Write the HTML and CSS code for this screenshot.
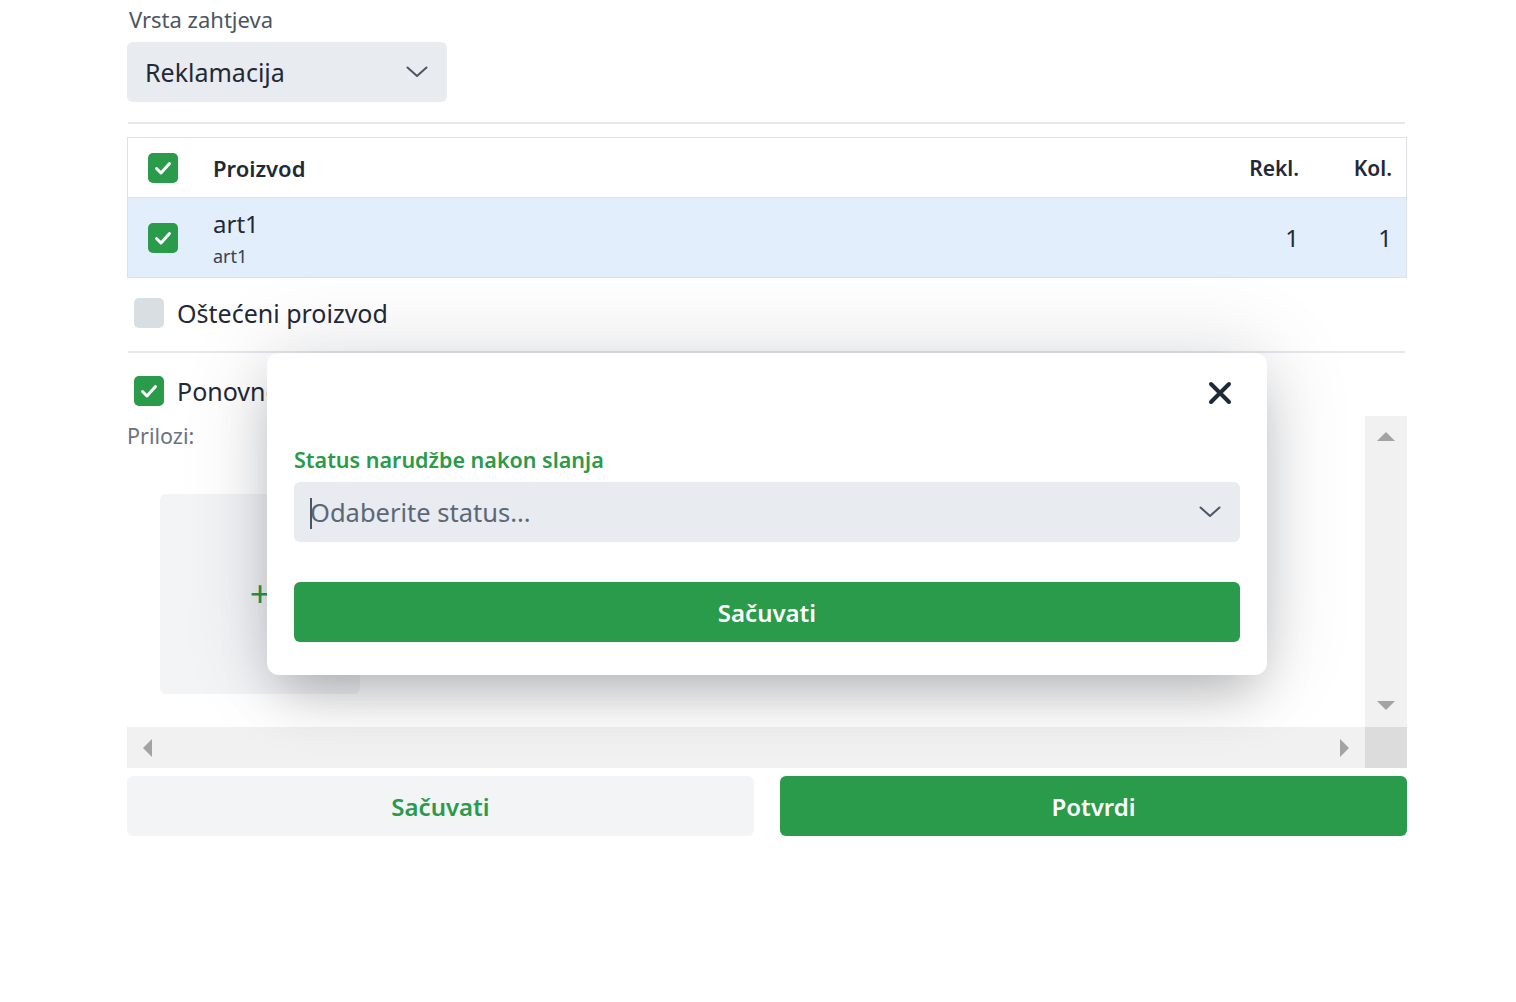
FILE: index.html
```html
<!DOCTYPE html>
<html lang="hr">
<head>
<meta charset="utf-8">
<title>Zahtjev</title>
<link rel="stylesheet" href="styles.css">
</head>
<body>
<div class="page">
  <div class="field-label">Vrsta zahtjeva</div>
  <div class="select select-type">
    <span class="select-value">Reklamacija</span>
    <svg class="chevron" width="22" height="12" viewBox="0 0 22 12"><path d="M1.5 1.5 L11 10 L20.5 1.5" fill="none" stroke="#4b5563" stroke-width="2" stroke-linecap="round" stroke-linejoin="round"/></svg>
  </div>
  <div class="divider first"></div>

  <div class="items">
    <div class="items-row items-head">
      <span class="cb on"><svg width="30" height="30" viewBox="0 0 30 30"><path d="M8.5 15.5 L13 20 L21.5 10.5" fill="none" stroke="#fff" stroke-width="3" stroke-linecap="round" stroke-linejoin="round"/></svg></span>
      <span class="col-name">Proizvod</span>
      <span class="col-num col-rekl">Rekl.</span>
      <span class="col-num col-kol">Kol.</span>
    </div>
    <div class="items-row items-body">
      <span class="cb on"><svg width="30" height="30" viewBox="0 0 30 30"><path d="M8.5 15.5 L13 20 L21.5 10.5" fill="none" stroke="#fff" stroke-width="3" stroke-linecap="round" stroke-linejoin="round"/></svg></span>
      <span class="col-name">
        <span class="art-title">art1</span>
        <span class="art-code">art1</span>
      </span>
      <span class="col-num col-rekl">1</span>
      <span class="col-num col-kol">1</span>
    </div>
  </div>

  <div class="check-row damaged">
    <span class="cb"></span>
    <span>Oštećeni proizvod</span>
  </div>
  <div class="divider second"></div>
  <div class="check-row resend">
    <span class="cb on"><svg width="30" height="30" viewBox="0 0 30 30"><path d="M8.5 15.5 L13 20 L21.5 10.5" fill="none" stroke="#fff" stroke-width="3" stroke-linecap="round" stroke-linejoin="round"/></svg></span>
    <span>Ponovno slanje</span>
  </div>

  <div class="attachments">
    <div class="att-viewport">
      <div class="att-label">Prilozi:</div>
      <div class="tiles">
        <div class="tile"><span class="plus">+</span></div>
      </div>
    </div>
    <div class="vscroll">
      <span class="arrow up"></span>
      <span class="arrow down"></span>
    </div>
    <div class="hscroll">
      <span class="arrow left"></span>
      <span class="arrow right"></span>
    </div>
    <div class="corner"></div>
  </div>

  <div class="actions">
    <button class="btn btn-light">Sačuvati</button>
    <button class="btn btn-green">Potvrdi</button>
  </div>
</div>

<div class="modal">
  <div class="modal-head">
    <button class="close" aria-label="Zatvori">
      <svg width="24" height="24" viewBox="0 0 24 24"><path d="M3 3 L21 21 M21 3 L3 21" stroke="#1f2937" stroke-width="4" stroke-linecap="round"/></svg>
    </button>
  </div>
  <div class="modal-label">Status narudžbe nakon slanja</div>
  <div class="select select-status">
    <span class="placeholder"><span class="caret"></span>Odaberite status...</span>
    <svg class="chevron" width="22" height="12" viewBox="0 0 22 12"><path d="M1.5 1.5 L11 10 L20.5 1.5" fill="none" stroke="#4b5563" stroke-width="2" stroke-linecap="round" stroke-linejoin="round"/></svg>
  </div>
  <button class="btn btn-green modal-save">Sačuvati</button>
</div>
</body>
</html>
```

FILE: styles.css
```css
* { box-sizing: border-box; }

html, body {
  margin: 0;
  padding: 0;
  background: #ffffff;
  font-family: "Noto Sans", "Open Sans", sans-serif;
  color: #1f2937;
}

.page {
  width: 1280px;
  margin-left: 127px;
  padding-top: 5px;
}

.field-label {
  font-size: 22px;
  line-height: 28px;
  color: #4b5563;
  padding-left: 2px;
}

.select {
  display: flex;
  align-items: center;
  justify-content: space-between;
  height: 60px;
  background: #e8ebef;
  border-radius: 6px;
}

.select-type {
  width: 320px;
  margin-top: 9px;
  padding: 0 19px 0 18px;
}

.select-value {
  font-size: 25px;
  color: #1f2937;
}

.divider {
  height: 2px;
  background: #e5e7eb;
  margin-left: 1px;
  margin-right: 2px;
}

.divider.first { margin-top: 20px; }
.divider.second { margin-top: 18px; }

.items {
  margin-top: 13px;
  border: 1px solid #dde1e6;
}

.items-row {
  display: flex;
  align-items: center;
  padding: 0 14px 0 20px;
}

.items-head {
  height: 59px;
  background: #ffffff;
  font-weight: 600;
  font-size: 21px;
  padding-top: 1px;
}

.items-head .col-name { font-size: 22px; }

.items-body {
  height: 80px;
  background: #e2eefc;
  border-top: 1px solid #dde4ec;
}

.cb {
  flex: none;
  display: inline-flex;
  width: 30px;
  height: 30px;
  border-radius: 5px;
  background: #d9dee3;
}

.cb.on { background: #2a9a4b; }

.col-name {
  flex: 1;
  margin-left: 35px;
  display: flex;
  flex-direction: column;
}

.art-title {
  font-size: 24px;
  line-height: 30px;
  margin-top: 3px;
}

.art-code {
  font-size: 18px;
  line-height: 26px;
  margin-top: 4px;
  color: #374151;
}

.col-num {
  text-align: right;
}

.col-rekl { width: 110px; }
.col-kol { width: 93px; }

.items-body .col-num { font-size: 24px; }

.check-row {
  display: flex;
  align-items: center;
  height: 40px;
  padding-left: 7px;
  font-size: 25px;
  gap: 13px;
}

.check-row.damaged { margin-top: 15px; }
.check-row.resend { margin-top: 18px; }

.attachments {
  margin-top: 5px;
  height: 352px;
  display: grid;
  grid-template-columns: 1fr 42px;
  grid-template-rows: 1fr 41px;
}

.att-viewport {
  padding-top: 6px;
}

.att-label {
  font-size: 21.5px;
  line-height: 28px;
  color: #6b7280;
}

.tiles {
  margin-top: 44px;
  padding-left: 33px;
}

.tile {
  width: 200px;
  height: 200px;
  background: #f3f4f6;
  border-radius: 6px;
  display: flex;
  align-items: center;
  justify-content: center;
}

.plus {
  color: #2a9a4b;
  font-size: 36px;
  line-height: 1;
  font-weight: 400;
}

.vscroll, .hscroll {
  background: #f1f1f1;
  position: relative;
}

.corner { background: #dcdcdc; }

.arrow {
  position: absolute;
  width: 0;
  height: 0;
  border-style: solid;
}

.arrow.up {
  left: 12px;
  top: 16px;
  border-width: 0 9px 9px 9px;
  border-color: transparent transparent #a3a3a3 transparent;
}

.arrow.down {
  left: 12px;
  bottom: 17px;
  border-width: 9px 9px 0 9px;
  border-color: #a3a3a3 transparent transparent transparent;
}

.arrow.left {
  left: 16px;
  top: 12px;
  border-width: 9px 9px 9px 0;
  border-color: transparent #a3a3a3 transparent transparent;
}

.arrow.right {
  right: 16px;
  top: 12px;
  border-width: 9px 0 9px 9px;
  border-color: transparent transparent transparent #a3a3a3;
}

.actions {
  margin-top: 8px;
  display: grid;
  grid-template-columns: 1fr 1fr;
  gap: 26px;
}

.btn {
  height: 60px;
  border: none;
  border-radius: 6px;
  font-family: inherit;
  font-size: 24px;
  font-weight: 600;
  cursor: pointer;
}

.btn-light {
  background: #f3f4f6;
  color: #2a9a4b;
}

.btn-green {
  background: #2a9a4b;
  color: #ffffff;
}

/* modal */
.modal {
  position: absolute;
  left: 267px;
  top: 353px;
  width: 1000px;
  height: 322px;
  background: #ffffff;
  border-radius: 12px;
  padding: 20px 27px 33px 27px;
  box-shadow: 0 25px 50px -12px rgba(0, 0, 0, 0.25), 0 0 90px rgba(15, 23, 42, 0.14);
}

.modal-head {
  height: 40px;
  display: flex;
  justify-content: flex-end;
  align-items: center;
  padding-right: 8px;
}

.close {
  border: none;
  background: transparent;
  padding: 0;
  width: 24px;
  height: 24px;
  display: flex;
}

.modal-label {
  margin-top: 33px;
  font-size: 21.5px;
  line-height: 28px;
  font-weight: 600;
  color: #2a9a4b;
}

.select-status {
  margin-top: 8px;
  padding: 0 19px 0 16px;
}

.placeholder {
  position: relative;
  font-size: 25.5px;
  color: #5b6779;
}

.caret {
  position: absolute;
  left: 0;
  top: 3px;
  width: 2px;
  height: 31px;
  background: #4b5563;
}

.modal-save {
  width: 100%;
  margin-top: 40px;
}
```
